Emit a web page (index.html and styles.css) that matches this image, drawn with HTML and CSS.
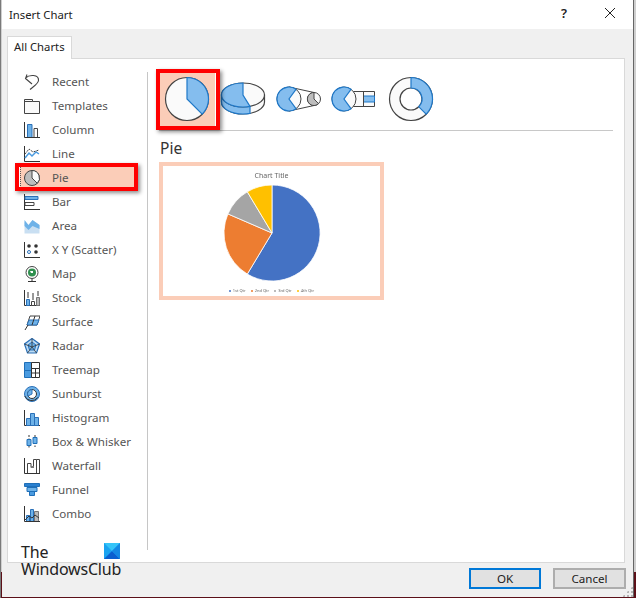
FILE: index.html
```html
<!DOCTYPE html>
<html lang="en">
<head>
<meta charset="utf-8">
<title>Insert Chart</title>
<link rel="stylesheet" href="styles.css">
</head>
<body>
<div class="desk">
  <div class="dialog">
    <header class="titlebar">
      <span class="title">Insert Chart</span>
      <span class="help">?</span>
      <svg class="close" width="12" height="12" viewBox="0 0 12 12"><path d="M1 1l10 10M11 1L1 11" stroke="#222" fill="none"/></svg>
    </header>
    <div class="body">
      <div class="tab">All Charts</div>
      <main class="panel">
        <nav class="sidebar">
          <div class="row"><svg class="ico" viewBox="0 0 16 16"><path d="M3 .5L1.500 4.500 8 10M1.500 4C5 .5 15 0 14.500 6.500 14 10 10 12 6 15.500" fill="none" stroke="#444" stroke-width="1.100"/></svg><span>Recent</span></div>
          <div class="row"><svg class="ico" viewBox="0 0 16 16"><path d="M.5 1.500h8v2h7v12H.5zM.5 3.500h8" fill="#fafafa" stroke="#444"/></svg><span>Templates</span></div>
          <div class="row"><svg class="ico" viewBox="0 0 16 16"><path d="M3.500 2.500H8v13H3.500z" fill="#6eb2e8" stroke="#2a70b8"/><path d="M10 6.500h3.500v9H10z" fill="#fff" stroke="#444"/><path d="M.5 0v15.500H16" fill="none" stroke="#333"/></svg><span>Column</span></div>
          <div class="row"><svg class="ico" viewBox="0 0 16 16"><path d="M.5 0v15.500H16" fill="none" stroke="#333"/><path d="M1 12l4-5 3 3 4-4 3 2" fill="none" stroke="#4a9be0" stroke-width="1.500"/><path d="M1 8l4-5 4 3 6-2" fill="none" stroke="#444" stroke-dasharray="2 1"/></svg><span>Line</span></div>
          <div class="row selected"><svg class="ico" viewBox="0 0 16 16"><circle cx="8" cy="8" r="7.500" fill="#bdbdbd" stroke="#444"/><path d="M8 .5a7.500 7.500 0 0 1 5.300 12.800L8 8z" fill="#fbfbfb" stroke="#444"/></svg><span>Pie</span></div>
          <div class="row"><svg class="ico" viewBox="0 0 16 16"><path d="M.5 0v16" stroke="#333"/><path d="M1 2.500h13v3H1z" fill="#6eb2e8" stroke="#2a70b8"/><path d="M1 8.500h9v3H1z" fill="#fff" stroke="#444"/><path d="M0 15.500h16" stroke="#333"/></svg><span>Bar</span></div>
          <div class="row"><svg class="ico" viewBox="0 0 16 16"><path d="M.5 4l4 3 4-5 7 5v8.500H.5z" fill="#c9dff2"/><path d="M.5 2l4 5 4-5 7 5v4l-7-3-4 4-4-4z" fill="#6eb2e8"/></svg><span>Area</span></div>
          <div class="row"><svg class="ico" viewBox="0 0 16 16"><path d="M.5 0v15.500H16" fill="none" stroke="#333"/><circle cx="5" cy="4" r="1.800" fill="#333"/><circle cx="12" cy="4" r="1.800" fill="#333"/><circle cx="12" cy="10" r="1.800" fill="#333"/><circle cx="5" cy="10" r="1.500" fill="#fff" stroke="#2a70b8"/></svg><span>X Y (Scatter)</span></div>
          <div class="row"><svg class="ico" viewBox="0 0 16 16"><circle cx="8" cy="6.500" r="6" fill="#fff" stroke="#444"/><circle cx="8" cy="6.500" r="4" fill="#2f8f4e"/><path d="M6 5h3v2H7z" fill="#fff"/><path d="M4 15.500h8M8 13v2" stroke="#333"/></svg><span>Map</span></div>
          <div class="row"><svg class="ico" viewBox="0 0 16 16"><path d="M.5 0v15.500H16" fill="none" stroke="#333"/><path d="M2.500 9.500h3v6h-3z" fill="#6eb2e8" stroke="#2a70b8"/><path d="M7.500 11.500h3v4h-3z" fill="#fff" stroke="#444"/><path d="M12.500 7.500h3v8h-3z" fill="#bbb" stroke="#777"/><path d="M4 2v6M9 3v7M14 1v5" stroke="#333"/></svg><span>Stock</span></div>
          <div class="row"><svg class="ico" viewBox="0 0 16 16"><path d="M3 11l3-9h10l-3 9z" fill="#fff" stroke="#444"/><path d="M3 11l2-5h10l-2 5z" fill="#6eb2e8" stroke="#2a70b8"/><path d="M8 11l3-9M1 16l3-5" stroke="#333"/></svg><span>Surface</span></div>
          <div class="row"><svg class="ico" viewBox="0 0 16 16"><path d="M8 .5l7.500 5.500-3 9h-9l-3-9z" fill="#bcdcf5" stroke="#2a70b8" stroke-width="1.200"/><path d="M8 4l4 3-1.500 5h-5L4 7z" fill="#6eb2e8" stroke="#2a70b8"/><path d="M8 .5V9M.5 6L8 9l7.500-3M3.500 15L8 9l4.500 6" stroke="#333" fill="none" stroke-width=".8"/></svg><span>Radar</span></div>
          <div class="row"><svg class="ico" viewBox="0 0 16 16"><path d="M.5.500h7v8h-7zM.5 8.500h7v7h-7z" fill="#4a9be0" stroke="#1f6fb8"/><path d="M7.500.500h8v6h-8zM7.500 6.500h8v9h-8zM11.500 6.500v9M7.500 11h8" fill="#fff" stroke="#333"/></svg><span>Treemap</span></div>
          <div class="row"><svg class="ico" viewBox="0 0 16 16"><circle cx="8" cy="8" r="7.500" fill="#6eb2e8" stroke="#2a70b8"/><circle cx="8" cy="8" r="4.500" fill="#fff" stroke="#333"/><path d="M8 3.500a4.500 4.500 0 0 0-4 6.500L8 8z" fill="#6eb2e8" stroke="#2a70b8"/><path d="M.8 10a7.500 7.500 0 0 0 13 1.500" fill="none" stroke="#333"/></svg><span>Sunburst</span></div>
          <div class="row"><svg class="ico" viewBox="0 0 16 16"><path d="M.5 0v15.500H16" fill="none" stroke="#333"/><path d="M2.500 8.500h4v7h-4zM6.500 3.500h4v12h-4z" fill="#6eb2e8" stroke="#2a70b8"/><path d="M10.500 7.500h4v8h-4z" fill="#6eb2e8" stroke="#2a70b8"/></svg><span>Histogram</span></div>
          <div class="row"><svg class="ico" viewBox="0 0 16 16"><path d="M5 1v14M11 1v12" stroke="#333" stroke-dasharray="2 1.500"/><path d="M3 5.500h4v6H3zM9 3.500h4v6H9z" fill="#6eb2e8" stroke="#1f6fb8"/></svg><span>Box &amp; Whisker</span></div>
          <div class="row"><svg class="ico" viewBox="0 0 16 16"><path d="M.5 0v15.500H16" fill="none" stroke="#333"/><path d="M3.500 15V5.500H7v4h2.500V1.500h3V15M12.500 1.500h3V15" fill="none" stroke="#444"/><path d="M7 9h3" stroke="#777" stroke-width="2"/></svg><span>Waterfall</span></div>
          <div class="row"><svg class="ico" viewBox="0 0 16 16"><path d="M.5 1.500h15v3H.5z" fill="#2a80d0" stroke="#1f6fb8"/><path d="M3 5.500h10v4H3z" fill="#6eb2e8" stroke="#1f6fb8"/><path d="M5.500 9.500h5v4h-5z" fill="#4a9be0" stroke="#1f6fb8"/></svg><span>Funnel</span></div>
          <div class="row"><svg class="ico" viewBox="0 0 16 16"><path d="M10.500 5.500h4v10h-4z" fill="#bbb" stroke="#777"/><path d="M2.500 9.500h3v6h-3zM6.500 3.500h3v12h-3z" fill="#6eb2e8" stroke="#2a70b8"/><path d="M.5 0v15.500H16" fill="none" stroke="#333"/><path d="M1 14l4-4 3 2 3-3 4 3" fill="none" stroke="#333"/></svg><span>Combo</span></div>
        </nav>
        <section class="content">
          <div class="types">
            <div class="thumb thumb-selected">
              <svg width="56" height="56" viewBox="0 0 56 56"><circle cx="28" cy="28" r="21.500" fill="#fafafa" stroke="#444" stroke-width="1.200"/><path d="M28 6.500a21.500 21.500 0 0 1 15.200 36.700L28 28z" fill="#84bdee" stroke="#1f78c8" stroke-width="1.200"/></svg>
            </div>
            <div class="thumb">
              <svg width="56" height="56" viewBox="0 0 56 56"><path d="M6.500 24v7c0 6.500 9.500 12 21.500 12s21.500-5.500 21.500-12v-7z" fill="#fafafa" stroke="#444" stroke-width="1.200"/><path d="M6.500 24v7c0 6.500 9.500 12 21.500 12 2.500 0 5-.2 7-.6V35z" fill="#84bdee" stroke="#1f78c8" stroke-width="1.200"/><ellipse cx="28" cy="24" rx="21.500" ry="12" fill="#fafafa" stroke="#444" stroke-width="1.200"/><path d="M28 12C16 12 6.500 17.500 6.500 24S16 36 28 36c2.500 0 5-.2 7-.6L28 24z" fill="#84bdee" stroke="#1f78c8" stroke-width="1.200"/></svg>
            </div>
            <div class="thumb">
              <svg width="56" height="56" viewBox="0 0 56 56"><path d="M18 16l25 5.500M18 40l25-5.500" stroke="#444"/><circle cx="18" cy="28" r="12" fill="#fafafa" stroke="#444"/><path d="M25 18.300A12 12 0 1 0 25 37.700L18 28z" fill="#84bdee" stroke="#1f78c8" stroke-width="1.200"/><circle cx="43" cy="28" r="6.500" fill="#fafafa" stroke="#444"/><path d="M43 28l4.500 4.600A6.500 6.500 0 1 1 43 21.500z" fill="#bdbdbd" stroke="#444"/></svg>
            </div>
            <div class="thumb">
              <svg width="56" height="56" viewBox="0 0 56 56"><path d="M18.500 20.500h29v15h-29z" fill="#fafafa" stroke="#444"/><path d="M36.500 25h11v6h-11z" fill="#84bdee" stroke="#1f78c8"/><path d="M36.500 20.500v15" stroke="#444"/><circle cx="17" cy="28" r="12" fill="#fafafa" stroke="#444"/><path d="M24 18.300A12 12 0 1 0 24 37.700L17 28z" fill="#84bdee" stroke="#1f78c8" stroke-width="1.200"/></svg>
            </div>
            <div class="thumb">
              <svg width="56" height="56" viewBox="0 0 56 56"><circle cx="28" cy="28" r="21.500" fill="#fafafa" stroke="#444" stroke-width="1.200"/><circle cx="28" cy="28" r="11" fill="#fff" stroke="#444" stroke-width="1.200"/><path d="M28 6.500a21.500 21.500 0 0 1 15.200 36.700L35.800 35.800A11 11 0 0 0 28 17z" fill="#84bdee" stroke="#1f78c8" stroke-width="1.200"/></svg>
            </div>
          </div>
          <h2 class="heading">Pie</h2>
          <figure class="preview">
            <div class="chart-title">Chart Title</div>
            <svg class="pie" width="98" height="98" viewBox="-49 -49 98 98">
              <g stroke="#fff" stroke-width=".8">
                <path d="M0 0V-48A48 48 0 1 1-24.700 41.100z" fill="#4472c4"/>
                <path d="M0 0L-24.700 41.100A48 48 0 0 1-44.100-19.100z" fill="#ed7d31"/>
                <path d="M0 0L-44.100-19.100A48 48 0 0 1-24.700-41.200z" fill="#a5a5a5"/>
                <path d="M0 0L-24.700-41.200A48 48 0 0 1 0-48z" fill="#ffc000"/>
              </g>
            </svg>
            <div class="legend">
              <span class="key k1">1st Qtr</span><span class="key k2">2nd Qtr</span><span class="key k3">3rd Qtr</span><span class="key k4">4th Qtr</span>
            </div>
          </figure>
        </section>
      </main>
      <footer class="actions">
        <button class="btn btn-default">OK</button>
        <button class="btn">Cancel</button>
      </footer>
    </div>
    <div class="grip"></div>
    <div class="watermark">
      <div class="wm-line">The</div>
      <div class="wm-line">WindowsClub</div>
      <svg class="wm-logo" width="16" height="16" viewBox="0 0 16 16"><rect width="16" height="16" fill="#1aa3f0"/><path d="M0 0l8 8 8-8z" fill="#35c4f8"/><path d="M0 16l8-8 8 8z" fill="#0a5fd0"/><path d="M16 0L8 8l8 8z" fill="#1488e4"/></svg>
    </div>
  </div>
</div>
</body>
</html>
```

FILE: styles.css
```css
* { box-sizing: border-box; }
html, body { margin: 0; padding: 0; }
body { width: 636px; height: 598px; overflow: hidden; font-family: "Noto Sans", "Open Sans", sans-serif; }
.desk {
  width: 636px; height: 598px; padding: 0 2px 1px 1px;
  background: linear-gradient(#cfcfcf 0 572px, #5c1018 572px);
  border-left: 1px solid #7a7a7a;
}
.dialog {
  position: relative; height: 100%; display: flex; flex-direction: column;
  background: #f0f0f0; border-right: 1px solid #666;
}
.titlebar {
  height: 29px; flex: none; display: flex; align-items: center; background: #fff;
  padding-left: 7px; font-size: 11.300px; color: #222;
}
.title { flex: 1; margin-top: -1px; }
.help { font-size: 13px; font-weight: 600; margin: 0 37px 3px 0; color: #222; }
.close { margin: 0 17px 3px 0; }
.body { flex: 1; display: flex; flex-direction: column; padding: 7px 8px 0 5px; min-height: 0; }
.tab {
  width: 65px; height: 23px; background: #fff; border: 1px solid #d9d9d9; border-bottom: none;
  font-size: 11.300px; color: #222; padding: 2px 0 0 6px; margin-bottom: -1px; position: relative; z-index: 1;
}
.panel {
  height: 505px; flex: none; background: #fff; border: 1px solid #d9d9d9;
  display: flex; padding: 11px 11px 12px 12px;
}
.sidebar {
  width: 128px; flex: none; border-right: 1px solid #c6c6c6; padding-right: 13px; margin-top: 2px;
  display: flex; flex-direction: column;
}
.row {
  height: 24px; flex: none; display: flex; align-items: center; gap: 12px; padding-left: 4px;
  font-size: 11.600px; color: #555; position: relative;
}
.row span { margin-top: -2px; }
.row:first-child { margin-top: -2px; }
.ico { width: 16px; height: 16px; flex: none; }
.row.selected { background: #fbcdb8; border-left: 1px dotted #555; padding-left: 3px; }
.row.selected::after {
  content: ""; position: absolute; left: -6px; right: -4px; top: -3px; bottom: -1px;
  border: 4px solid #f00; box-shadow: 2px 2px 4px rgba(0, 0, 0, .45);
}
.content { flex: 1; padding-left: 11px; min-width: 0; position: relative; }
.types { display: flex; height: 60px; margin-top: 1px; border-bottom: 1px solid #c8c8c8; }
.thumb { width: 56px; height: 56px; flex: none; display: flex; }
.thumb-selected { position: relative; background: #fbcdb8; }
.thumb-selected::after {
  content: ""; position: absolute; left: -3px; right: -5px; top: -2px; bottom: -3px;
  border: 4px solid #f00; box-shadow: 2px 2px 4px rgba(0, 0, 0, .45);
}
.heading { margin: 7px 0 0 1px; font-size: 15.500px; line-height: 21px; font-weight: 400; color: #333; }
.preview {
  margin: 3px 0 0 0; width: 225px; height: 138px; border: 4px solid #fbcdb8; background: #fff;
  display: flex; flex-direction: column; align-items: center; padding-top: 5px; filter: blur(.25px);
}
.chart-title { font-size: 7px; line-height: 10px; color: #666; }
.pie { flex: none; margin-top: 3px; }
.legend { display: flex; gap: 5px; margin-top: 6px; font-size: 4px; line-height: 6px; color: #666; }
.key { display: flex; align-items: center; gap: 2px; }
.key::before { content: ""; width: 2px; height: 2px; border-radius: 50%; }
.k1::before { background: #4472c4; }
.k2::before { background: #ed7d31; }
.k3::before { background: #a5a5a5; }
.k4::before { background: #ffc000; }
.actions { display: flex; justify-content: flex-end; gap: 12px; margin: 5px -1px 0 0; }
.btn {
  width: 73px; height: 21px; padding: 0; background: #e1e1e1; border: 2px solid #adadad;
  font: 11.600px "Noto Sans", "Open Sans", sans-serif; color: #222;
}
.btn-default { width: 72px; border-color: #0078d7; }
.grip {
  position: absolute; right: 0; bottom: 0; width: 11px; height: 11px;
  background: radial-gradient(circle, #b5b5b5 1px, transparent 1.300px) 0 0 / 4px 4px;
  clip-path: polygon(100% 0, 100% 100%, 0 100%);
}
.watermark { position: absolute; left: 19px; top: 544px; width: 100px; color: #222; font-size: 16px; letter-spacing: -.2px; line-height: 17px; }
.wm-line { white-space: nowrap; }
.wm-logo { position: absolute; left: 83px; top: -1px; }
```
